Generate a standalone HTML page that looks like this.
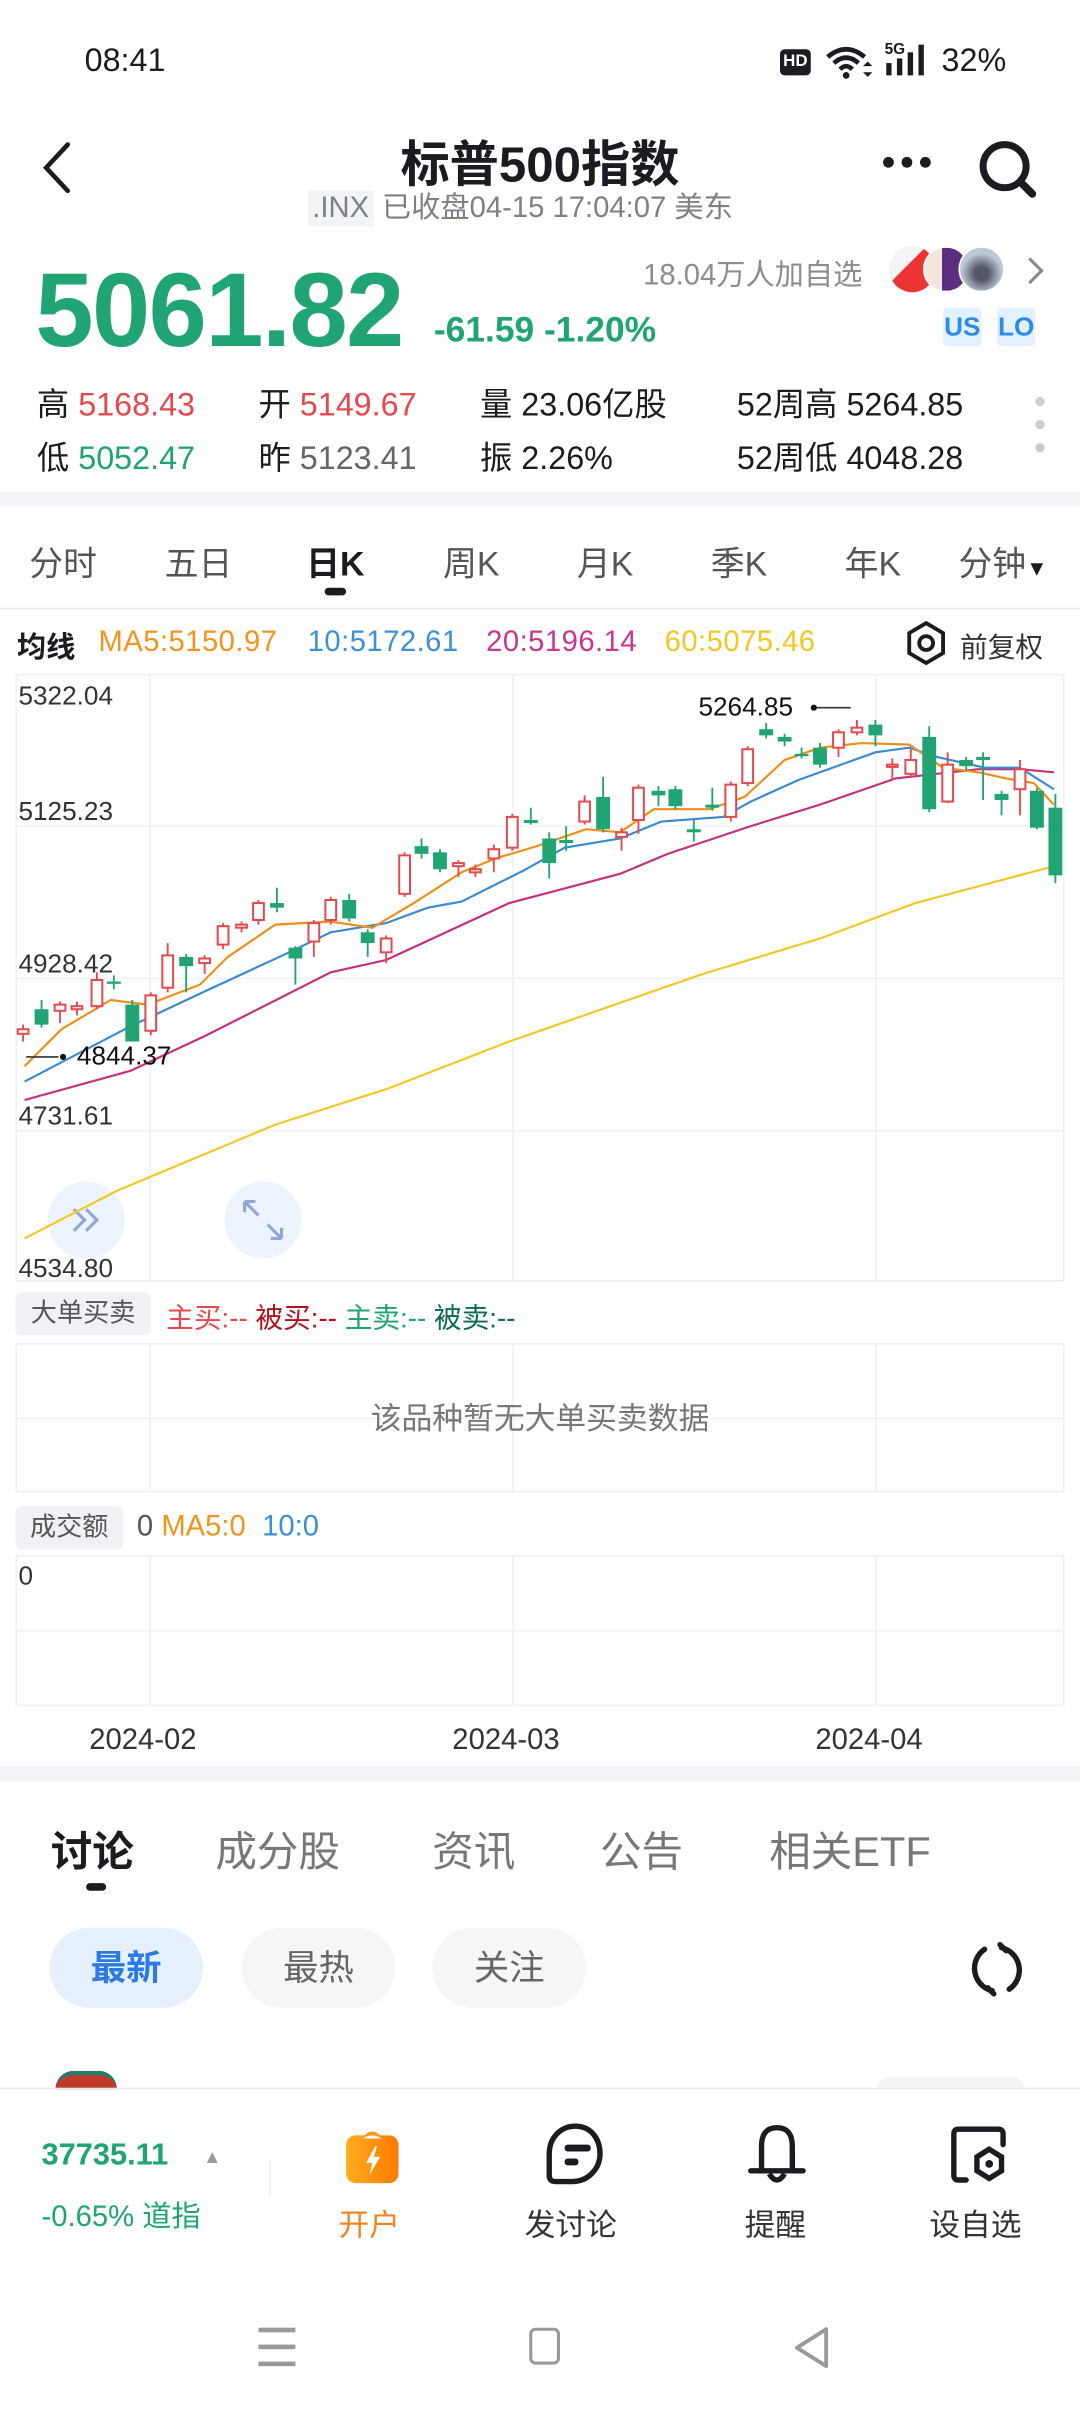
<!DOCTYPE html>
<html><head><meta charset="utf-8"><style>
*{margin:0;padding:0;box-sizing:border-box}
html,body{width:1080px;height:2412px;overflow:hidden;background:#fff}
#w{position:absolute;left:0;top:0;width:702px;height:1568px;transform:scale(1.53846);transform-origin:0 0;font-family:"Liberation Sans","Noto Sans CJK SC",sans-serif;color:#1a1c22}
.a{position:absolute;white-space:nowrap}
.g{color:#1fa472}.r{color:#e5484d}
.gray{color:#8a8d95}
</style></head><body><div id="w">

<div class="a" style="left:55px;top:28px;font-size:21px">08:41</div>
<div class="a" style="left:507px;top:32px;width:20px;height:17px;background:#1a1c22;border-radius:3px;color:#fff;font-size:11px;font-weight:bold;text-align:center;line-height:17px">HD</div>
<svg class="a" style="left:535px;top:28px" width="34" height="24" viewBox="0 0 34 24"><path d="M3 9 Q15 -1 27 9" stroke="#1a1c22" stroke-width="3" fill="none"/><path d="M7 13 Q15 6 23 13" stroke="#1a1c22" stroke-width="3" fill="none"/><path d="M11 17 Q15 13 19 17" stroke="#1a1c22" stroke-width="3" fill="none"/><circle cx="15" cy="21" r="2.2" fill="#1a1c22"/><path d="M26 15 l3 -3 l3 3z M26 19 l3 3 l3 -3z" fill="#1a1c22"/></svg>
<div class="a" style="left:575px;top:27px;font-size:10px;font-weight:bold">5G</div>
<svg class="a" style="left:576px;top:28px" width="30" height="22"><rect x="0" y="13" width="3.5" height="8" fill="#1a1c22"/><rect x="7" y="10" width="3.5" height="11" fill="#1a1c22"/><rect x="14" y="6" width="3.5" height="15" fill="#1a1c22"/><rect x="21" y="1" width="3.5" height="20" fill="#1a1c22"/></svg>
<div class="a" style="left:612px;top:28px;font-size:21px">32%</div>

<svg class="a" style="left:24px;top:90px" width="26" height="38"><path d="M20 4 L6 19 L20 34" stroke="#1a1c22" stroke-width="3" fill="none" stroke-linecap="round"/></svg>
<div class="a" style="left:0;width:702px;text-align:center;top:82px;font-size:32px;font-weight:bold">标普500指数</div>
<div class="a" style="left:200px;top:120px;height:25px;font-size:19px;color:#7d8088"><span style="background:#f2f3f5;padding:1px 3px">.INX</span> 已收盘04-15 17:04:07 美东</div>
<div class="a" style="left:574px;top:102px;width:34px;height:8px"><span style="position:absolute;left:0;width:7px;height:7px;border-radius:50%;background:#1a1c22"></span><span style="position:absolute;left:12px;width:7px;height:7px;border-radius:50%;background:#1a1c22"></span><span style="position:absolute;left:24px;width:7px;height:7px;border-radius:50%;background:#1a1c22"></span></div>
<svg class="a" style="left:632px;top:88px" width="46" height="44"><circle cx="21" cy="20" r="14" stroke="#1a1c22" stroke-width="4.5" fill="none"/><path d="M33 32 L39 38" stroke="#1a1c22" stroke-width="5" stroke-linecap="round"/></svg>

<div class="a gray" style="left:418px;top:164px;font-size:19px">18.04万人加自选</div>
<div class="a" style="left:578px;top:160px;width:30px;height:30px;border-radius:50%;background:linear-gradient(135deg,#f4f4f4 40%,#e33 41%);"></div>
<div class="a" style="left:600px;top:160px;width:30px;height:30px;border-radius:50%;background:linear-gradient(90deg,#f3e6dc 40%,#5a2f80 41%);border:1px solid #fff"></div>
<div class="a" style="left:623px;top:160px;width:30px;height:30px;border-radius:50%;background:radial-gradient(circle at 50% 60%,#556 20%,#bcc8d6 60%);border:1px solid #fff"></div>
<svg class="a" style="left:666px;top:166px" width="14" height="20"><path d="M3 2 L11 10 L3 18" stroke="#888" stroke-width="2" fill="none"/></svg>

<div class="a g" style="left:23px;top:164px;font-size:68px;font-weight:bold;letter-spacing:-1px;line-height:76px">5061.82</div>
<div class="a g" style="left:282px;top:201px;font-size:23px;font-weight:bold">-61.59 -1.20%</div>
<div class="a" style="left:613px;top:200px;width:25px;height:25px;background:#e2f1fd;border-radius:3px;color:#2d8de6;font-weight:bold;font-size:17px;text-align:center;line-height:25px">US</div>
<div class="a" style="left:648px;top:200px;width:25px;height:25px;background:#e2f1fd;border-radius:3px;color:#2d8de6;font-weight:bold;font-size:17px;text-align:center;line-height:25px">LO</div>

<div class="a" style="left:24px;top:247px;font-size:21px">高 <span class="r">5168.43</span></div>
<div class="a" style="left:168px;top:247px;font-size:21px">开 <span class="r">5149.67</span></div>
<div class="a" style="left:312px;top:247px;font-size:21px">量 23.06亿股</div>
<div class="a" style="left:479px;top:247px;font-size:21px">52周高 5264.85</div>
<div class="a" style="left:24px;top:282px;font-size:21px">低 <span class="g">5052.47</span></div>
<div class="a" style="left:168px;top:282px;font-size:21px">昨 <span style="color:#666">5123.41</span></div>
<div class="a" style="left:312px;top:282px;font-size:21px">振 2.26%</div>
<div class="a" style="left:479px;top:282px;font-size:21px">52周低 4048.28</div>
<div class="a" style="left:673px;top:258px;width:6px;height:6px;border-radius:50%;background:#ccc"></div>
<div class="a" style="left:673px;top:273px;width:6px;height:6px;border-radius:50%;background:#ccc"></div>
<div class="a" style="left:673px;top:288px;width:6px;height:6px;border-radius:50%;background:#ccc"></div>

<div class="a" style="left:0;top:320px;width:702px;height:9px;background:#f3f4f7"></div>

<div class="a" style="left:0;top:349px;width:702px;font-size:22px;color:#555">
<span class="a" style="left:19px">分时</span><span class="a" style="left:107px">五日</span><span class="a" style="left:199px;color:#1a1c22;font-weight:bold">日K</span><span class="a" style="left:288px">周K</span><span class="a" style="left:375px">月K</span><span class="a" style="left:462px">季K</span><span class="a" style="left:549px">年K</span><span class="a" style="left:623px">分钟<span style="font-size:14px;color:#1a1c22">▼</span></span></div>
<div class="a" style="left:211px;top:382px;width:14px;height:5px;border-radius:3px;background:#1a1c22"></div>
<div class="a" style="left:0;top:395px;width:702px;height:1px;background:#eee"></div>

<div class="a" style="left:11px;top:406px;font-size:19px;font-weight:bold">均线</div>
<div class="a" style="left:64px;top:407px;font-size:19px;color:#f0941d;letter-spacing:.3px">MA5:5150.97</div>
<div class="a" style="left:200px;top:407px;font-size:19px;color:#3d8fd6;letter-spacing:.3px">10:5172.61</div>
<div class="a" style="left:316px;top:407px;font-size:19px;color:#c9358f;letter-spacing:.3px">20:5196.14</div>
<div class="a" style="left:432px;top:407px;font-size:19px;color:#f3c623;letter-spacing:.3px">60:5075.46</div>
<svg class="a" style="left:587px;top:403px" width="30" height="30"><path d="M15 2 L26 8.5 L26 21.5 L15 28 L4 21.5 L4 8.5Z" stroke="#1a1c22" stroke-width="2.5" fill="none"/><circle cx="15" cy="15" r="4.5" stroke="#1a1c22" stroke-width="2.5" fill="none"/></svg>
<div class="a" style="left:624px;top:407px;font-size:18px;color:#333">前复权</div>

<svg class="a" style="left:0;top:0" width="702" height="1568">
<g stroke="#eef0f4" stroke-width="1" fill="none">
<rect x="10.5" y="438.5" width="681" height="394"/>
<line x1="10" y1="537" x2="691" y2="537"/><line x1="10" y1="636" x2="691" y2="636"/><line x1="10" y1="735" x2="691" y2="735"/>
<line x1="97.5" y1="438" x2="97.5" y2="832"/><line x1="333.5" y1="438" x2="333.5" y2="832"/><line x1="569.5" y1="438" x2="569.5" y2="832"/>
<rect x="10.5" y="873.5" width="681" height="96"/>
<line x1="10" y1="922" x2="691" y2="922"/>
<line x1="97.5" y1="873" x2="97.5" y2="969"/><line x1="333.5" y1="873" x2="333.5" y2="969"/><line x1="569.5" y1="873" x2="569.5" y2="969"/>
<rect x="10.5" y="1011.5" width="681" height="97"/>
<line x1="10" y1="1060" x2="691" y2="1060"/>
<line x1="97.5" y1="1011" x2="97.5" y2="1108"/><line x1="333.5" y1="1011" x2="333.5" y2="1108"/><line x1="569.5" y1="1011" x2="569.5" y2="1108"/>
</g>
<circle cx="56" cy="793" r="25" fill="#e9f0fb" opacity=".8"/>
<circle cx="171" cy="793" r="25" fill="#e9f0fb" opacity=".8"/>
<path d="M48 786 L55 793 L48 800 M56 786 L63 793 L56 800" stroke="#8fa7d8" stroke-width="2" fill="none"/>
<path d="M159 781 L159 788 M159 781 L166 781 M159 781 L168 790 M183 805 L183 798 M183 805 L176 805 M183 805 L174 796" stroke="#8fa7d8" stroke-width="2" fill="none"/>
<g fill="none" stroke-width="1.4">
<polyline stroke="#f3c623" points="16,805 76,774 179,731 251,708 331,677 457,633 533,610 595,587 685,563"/>
<polyline stroke="#c2307f" points="16,715 85,696 134,673 215,632 251,624 331,587 403,568 434,555 488,537 533,523 582,506 636,500 663,500 685,502"/>
<polyline stroke="#3a8ad2" points="16,703 85,667 134,644 188,619 215,606 251,600 278,590 300,586 340,566 367,551 403,545 430,534 470,531 488,521 519,507 569,489 591,486 609,492 640,499 663,499 685,513"/>
<polyline stroke="#ee8e1a" points="16,693 40,669 72,650 96,653 130,640 148,622 179,601 215,599 242,603 269,587 300,567 322,558 349,550 381,539 403,541 425,526 461,526 484,518 510,494 533,486 560,483 591,484 613,499 636,502 654,506 672,509 685,523"/>
</g>
<g id="c"></g>
<line x1="17" y1="687" x2="38" y2="687" stroke="#333" stroke-width="1"/><circle cx="41" cy="687" r="2" fill="#111"/>
<line x1="531" y1="460" x2="553" y2="460" stroke="#333" stroke-width="1"/><circle cx="529" cy="460" r="2" fill="#111"/>
</svg>
<div class="a" style="left:12px;top:443px;font-size:17px;color:#333">5322.04</div>
<div class="a" style="left:12px;top:518px;font-size:17px;color:#333">5125.23</div>
<div class="a" style="left:12px;top:617px;font-size:17px;color:#333">4928.42</div>
<div class="a" style="left:12px;top:716px;font-size:17px;color:#333">4731.61</div>
<div class="a" style="left:12px;top:815px;font-size:17px;color:#333">4534.80</div>
<div class="a" style="left:50px;top:677px;font-size:17px;color:#111">4844.37</div>
<div class="a" style="left:454px;top:450px;font-size:17px;color:#111">5264.85</div>

<div class="a" style="left:10px;top:840px;width:88px;height:28px;background:#f0f1f4;border-radius:4px;font-size:17px;color:#555;text-align:center;line-height:28px">大单买卖</div>
<div class="a" style="left:108px;top:843px;font-size:18px"><span style="color:#e5484d">主买:--</span> <span style="color:#b3111d">被买:--</span> <span style="color:#1fa472">主卖:--</span> <span style="color:#0b6b4e">被卖:--</span></div>
<div class="a" style="left:0;width:702px;text-align:center;top:906px;font-size:20px;color:#777">该品种暂无大单买卖数据</div>

<div class="a" style="left:10px;top:979px;width:70px;height:28px;background:#f0f1f4;border-radius:4px;font-size:17px;color:#555;text-align:center;line-height:28px">成交额</div>
<div class="a" style="left:89px;top:982px;font-size:19px;color:#555">0 <span style="color:#f0941d">MA5:0</span>&nbsp; <span style="color:#3d8fd6">10:0</span></div>
<div class="a" style="left:12px;top:1015px;font-size:17px;color:#333">0</div>

<div class="a" style="left:58px;top:1121px;font-size:19px;color:#333">2024-02</div>
<div class="a" style="left:294px;top:1121px;font-size:19px;color:#333">2024-03</div>
<div class="a" style="left:530px;top:1121px;font-size:19px;color:#333">2024-04</div>

<div class="a" style="left:0;top:1148px;width:702px;height:10px;background:#f3f4f7"></div>

<div class="a" style="left:33px;top:1182px;font-size:27px;font-weight:bold">讨论</div>
<div class="a" style="left:140px;top:1182px;font-size:27px;color:#777">成分股</div>
<div class="a" style="left:281px;top:1182px;font-size:27px;color:#777">资讯</div>
<div class="a" style="left:390px;top:1182px;font-size:27px;color:#777">公告</div>
<div class="a" style="left:500px;top:1182px;font-size:27px;color:#777">相关ETF</div>
<div class="a" style="left:56px;top:1224px;width:13px;height:5px;border-radius:3px;background:#1a1c22"></div>

<div class="a" style="left:32px;top:1253px;width:100px;height:52px;border-radius:26px;background:#e6f0fd;color:#2c7be5;font-weight:bold;font-size:23px;text-align:center;line-height:52px">最新</div>
<div class="a" style="left:157px;top:1253px;width:100px;height:52px;border-radius:26px;background:#f5f6f8;color:#666;font-size:23px;text-align:center;line-height:52px">最热</div>
<div class="a" style="left:281px;top:1253px;width:100px;height:52px;border-radius:26px;background:#f5f6f8;color:#666;font-size:23px;text-align:center;line-height:52px">关注</div>
<svg class="a" style="left:626px;top:1258px" width="44" height="44"><path d="M14 9 A15 15 0 0 0 19 36 M20 38 l-4 -4" stroke="#1a1c22" stroke-width="3.5" fill="none" stroke-linecap="round"/><path d="M30 35 A15 15 0 0 0 25 8 M24 6 l4 4" stroke="#1a1c22" stroke-width="3.5" fill="none" stroke-linecap="round"/></svg>

<div class="a" style="left:36px;top:1346px;width:40px;height:12px;border-radius:20px 20px 0 0;background:#c0392b;border-top:3px solid #2a7a66"></div>
<div class="a" style="left:570px;top:1350px;width:96px;height:8px;border-radius:20px 20px 0 0;background:#f3f4f6"></div>
<div class="a" style="left:0;top:1357px;width:702px;height:1px;background:#e6e7ea"></div>

<div class="a g" style="left:27px;top:1390px;font-size:20px;font-weight:bold">37735.11</div>
<div class="a" style="left:132px;top:1395px;font-size:12px;color:#999">▲</div>
<div class="a g" style="left:27px;top:1426px;font-size:19px">-0.65% 道指</div>
<div class="a" style="left:175px;top:1404px;width:1px;height:24px;background:#eee"></div>

<svg class="a" style="left:222px;top:1381px" width="40" height="40"><defs><linearGradient id="og" x1="0" x2="1"><stop offset="0" stop-color="#ffad1f"/><stop offset="1" stop-color="#ff7a00"/></linearGradient></defs><path d="M13 9 Q20 0 27 9" fill="#ff9a10"/><rect x="3" y="7" width="34" height="31" rx="6" fill="url(#og)"/><path d="M14 9 Q20 5 26 9Z" fill="#fff"/><path d="M22 14 L16 25 L20 25 L18 33 L25 21 L21 21 L23 14Z" fill="#fff"/></svg>
<div class="a" style="left:220px;top:1430px;font-size:20px;color:#f08522">开户</div>

<svg class="a" style="left:352px;top:1380px" width="44" height="42"><path d="M22 2 C32 2 38 10 38 20 C38 30 30 38 20 38 L9 38 Q5 38 5 34 L5 20 C5 10 12 2 22 2Z" stroke="#1a1c22" stroke-width="3.5" fill="none"/><rect x="15" y="14" width="17" height="4.5" rx="2" fill="#1a1c22"/><rect x="15" y="23" width="9" height="4.5" rx="2" fill="#1a1c22"/></svg>
<div class="a" style="left:341px;top:1430px;font-size:20px;color:#333">发讨论</div>

<svg class="a" style="left:484px;top:1380px" width="44" height="42"><path d="M11 31 L11 15 Q11 3 21 3 Q31 3 31 15 L31 31" stroke="#1a1c22" stroke-width="3.5" fill="none"/><path d="M4 31 L38 31" stroke="#1a1c22" stroke-width="3.5" stroke-linecap="round"/><path d="M16 33 Q21 41 26 33" stroke="#1a1c22" stroke-width="3.5" fill="none"/></svg>
<div class="a" style="left:484px;top:1430px;font-size:20px;color:#333">提醒</div>

<svg class="a" style="left:616px;top:1380px" width="44" height="42"><path d="M12 37 L7 37 Q4 37 4 34 L4 7 Q4 4 7 4 L33 4 Q36 4 36 7 L36 14" stroke="#1a1c22" stroke-width="3.5" fill="none" stroke-linecap="round"/><path d="M27 17 L35 22 L35 31 L27 36 L19 31 L19 22Z" stroke="#1a1c22" stroke-width="3.5" fill="none"/><circle cx="27" cy="26.5" r="2.5" fill="#1a1c22"/></svg>
<div class="a" style="left:604px;top:1430px;font-size:20px;color:#333">设自选</div>

<div class="a" style="left:168px;top:1513px;width:24px;height:2.5px;background:#999;box-shadow:0 11px 0 #999,0 22px 0 #999"></div>
<div class="a" style="left:344px;top:1513px;width:20px;height:24px;border:2.5px solid #999;border-radius:4px"></div>
<svg class="a" style="left:513px;top:1512px" width="28" height="28"><path d="M24 2 L5 14 L24 26 Z" stroke="#999" stroke-width="2.5" fill="none" stroke-linejoin="round"/></svg>

<script>
var d=[[15,669,672,666,677,'r'],[27,656,666,650,668,'g'],[39,653,657,651,665,'r'],[50,654,656,651,660,'r'],[63,637,654,632,656,'r'],[74,638,639,634,643,'g'],[86,653,677,650,677,'g'],[98,647,670,645,673,'r'],[109,621,642,613,645,'r'],[121,622,628,620,645,'g'],[133,623,626,621,633,'r'],[145,602,614,600,617,'r'],[157,601,603,599,606,'r'],[168,587,598,585,601,'r'],[180,587,590,577,593,'g'],[192,616,623,615,640,'g'],[204,600,612,598,622,'r'],[215,585,598,583,601,'r'],[227,585,597,581,599,'g'],[239,606,613,604,622,'g'],[251,610,619,608,626,'r'],[263,556,581,554,583,'r'],[274,550,555,545,558,'g'],[286,554,565,552,567,'g'],[298,561,563,559,570,'r'],[309,565,567,562,570,'r'],[321,552,558,549,567,'r'],[333,531,551,529,553,'r'],[345,533,535,525,536,'g'],[357,545,561,541,571,'g'],[368,546,548,537,553,'g'],[380,521,534,517,536,'r'],[392,518,539,505,541,'g'],[404,541,544,538,553,'r'],[415,512,533,510,542,'r'],[428,514,517,511,524,'g'],[439,513,524,511,526,'g'],[451,539,541,533,547,'g'],[463,523,525,512,527,'g'],[475,510,531,508,534,'r'],[486,487,509,485,511,'r'],[498,474,478,470,480,'g'],[510,479,482,477,485,'g'],[521,490,491,486,493,'g'],[533,486,497,483,499,'g'],[545,476,486,474,492,'r'],[557,473,476,468,478,'r'],[569,471,478,468,485,'g'],[580,497,498,493,507,'r'],[592,494,503,487,505,'r'],[604,479,526,472,528,'g'],[616,497,521,489,522,'r'],[628,494,498,492,501,'g'],[639,492,494,489,520,'g'],[651,516,520,514,530,'g'],[663,500,513,494,530,'r'],[674,514,538,512,539,'g'],[686,525,569,516,574,'g']];
var s='';d.forEach(function(c){var col=c[5]=='r'?'#e5484d':'#1fa472';
s+='<line x1="'+c[0]+'" y1="'+c[3]+'" x2="'+c[0]+'" y2="'+c[4]+'" stroke="'+col+'" stroke-width="1.2"/>';
var h=Math.max(c[2]-c[1],1.5);
if(c[5]=='r')s+='<rect x="'+(c[0]-3.5)+'" y="'+c[1]+'" width="7" height="'+h+'" fill="#fff" stroke="'+col+'" stroke-width="1.3"/>';
else s+='<rect x="'+(c[0]-4.5)+'" y="'+c[1]+'" width="9" height="'+h+'" fill="'+col+'"/>';});
document.getElementById('c').innerHTML=s;
</script>
</div></body></html>
